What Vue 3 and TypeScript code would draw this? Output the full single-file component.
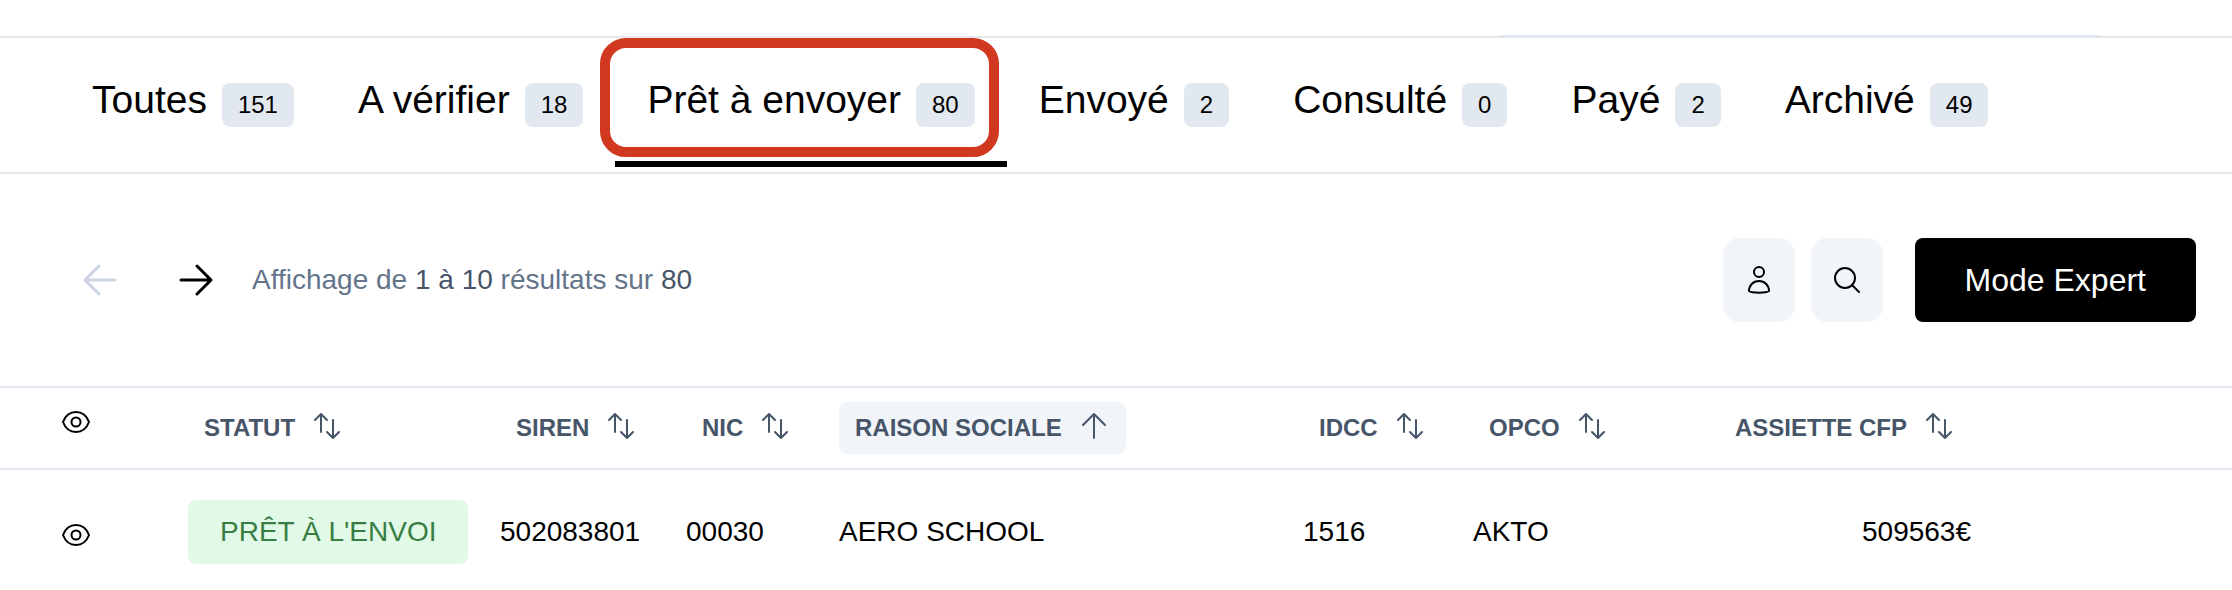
<script setup lang="ts">
import { ref } from 'vue'

interface Tab { label: string; count: number; highlighted?: boolean }
interface Column { key: string; label: string; sorted?: boolean; end?: boolean }

const tabs: Tab[] = [
  { label: 'Toutes', count: 151 },
  { label: 'A vérifier', count: 18 },
  { label: 'Prêt à envoyer', count: 80, highlighted: true },
  { label: 'Envoyé', count: 2 },
  { label: 'Consulté', count: 0 },
  { label: 'Payé', count: 2 },
  { label: 'Archivé', count: 49 },
]
const active = ref('Prêt à envoyer')

const columns: Column[] = [
  { key: 'statut', label: 'STATUT' },
  { key: 'siren', label: 'SIREN' },
  { key: 'nic', label: 'NIC' },
  { key: 'raison', label: 'RAISON SOCIALE', sorted: true },
  { key: 'idcc', label: 'IDCC' },
  { key: 'opco', label: 'OPCO' },
  { key: 'assiette', label: 'ASSIETTE CFP', end: true },
]

const rows = [
  {
    statut: "PRÊT À L'ENVOI",
    siren: '502083801',
    nic: '00030',
    raison: 'AERO SCHOOL',
    idcc: '1516',
    opco: 'AKTO',
    assiette: '509563€',
  },
]
</script>

<template>
  <main class="page">
    <div class="top-strip"><div class="field-edge"></div></div>

    <nav class="tabs" aria-label="Statuts">
      <button
        v-for="tab in tabs"
        :key="tab.label"
        type="button"
        class="tab"
        :class="{ active: tab.label === active }"
        @click="active = tab.label"
      >
        <span>{{ tab.label }}</span>
        <span class="count">{{ tab.count }}</span>
        <span v-if="tab.highlighted" class="marker"></span>
      </button>
    </nav>

    <section class="toolbar">
      <div class="pager">
        <button type="button" class="arrow" disabled aria-label="Page précédente">
          <svg width="40" height="40" viewBox="0 0 40 40"><path d="M35 20H5M19 6L5 20L19 34" /></svg>
        </button>
        <button type="button" class="arrow" aria-label="Page suivante">
          <svg width="40" height="40" viewBox="0 0 40 40"><path d="M5 20H35M21 6L35 20L21 34" /></svg>
        </button>
        <p class="summary">Affichage de <b>1 à 10</b> résultats sur <b>80</b></p>
      </div>
      <div class="actions">
        <button type="button" class="square" aria-label="Contact">
          <svg width="32" height="32" viewBox="0 0 32 32">
            <circle cx="16" cy="8" r="5" />
            <path d="M16 17C10 17 6 21.500 6 27C9 29.200 23 29.200 26 27C26 21.500 22 17 16 17Z" />
          </svg>
        </button>
        <button type="button" class="square" aria-label="Rechercher">
          <svg width="32" height="32" viewBox="0 0 32 32">
            <circle cx="14" cy="14" r="10" />
            <path d="M21 21L28 28" />
          </svg>
        </button>
        <button type="button" class="expert">Mode Expert</button>
      </div>
    </section>

    <table class="grid">
      <colgroup>
        <col class="c-view" />
        <col v-for="c in columns" :key="c.key" :class="'c-' + c.key" />
        <col />
      </colgroup>
      <thead>
        <tr>
          <th class="view">
            <button type="button" class="eye" aria-label="Colonnes visibles">
              <svg width="32" height="28" viewBox="0 0 32 28">
                <path d="M3 14C8 0.700 24 0.700 29 14C24 27.300 8 27.300 3 14Z" />
                <circle cx="16" cy="14" r="4.500" />
              </svg>
            </button>
          </th>
          <th v-for="c in columns" :key="c.key" :class="{ end: c.end }" scope="col">
            <button type="button" class="sort" :class="{ sorted: c.sorted }">
              <span>{{ c.label }}</span>
              <svg v-if="c.sorted" width="32" height="32" viewBox="0 0 32 32">
                <path d="M16 26V2M5 13L16 2L27 13" />
              </svg>
              <svg v-else width="32" height="32" viewBox="0 0 32 32">
                <path d="M10 20V2M4 8L10 2L16 8M22 8V26M16 20L22 26L28 20" />
              </svg>
            </button>
          </th>
          <td></td>
        </tr>
      </thead>
      <tbody>
        <tr v-for="row in rows" :key="row.siren">
          <td class="view">
            <button type="button" class="eye" aria-label="Voir la ligne">
              <svg width="32" height="28" viewBox="0 0 32 28">
                <path d="M3 14C8 0.700 24 0.700 29 14C24 27.300 8 27.300 3 14Z" />
                <circle cx="16" cy="14" r="4.500" />
              </svg>
            </button>
          </td>
          <td><span class="status">{{ row.statut }}</span></td>
          <td>{{ row.siren }}</td>
          <td>{{ row.nic }}</td>
          <td>{{ row.raison }}</td>
          <td>{{ row.idcc }}</td>
          <td>{{ row.opco }}</td>
          <td class="end">{{ row.assiette }}</td>
          <td></td>
        </tr>
      </tbody>
    </table>
  </main>
</template>

<style>
body {
  background: #fff;
}
</style>

<style scoped>
.page {
  font-family: "Liberation Sans", Arial, sans-serif;
  color: #000;
}
button {
  font: inherit;
  color: inherit;
  background: none;
  border: 0;
  padding: 0;
  margin: 0;
  cursor: pointer;
}
svg {
  display: block;
  flex: none;
  fill: none;
  stroke: currentColor;
  stroke-width: 2;
  stroke-linecap: round;
  stroke-linejoin: round;
}
.top-strip {
  display: flex;
  align-items: flex-end;
  justify-content: flex-end;
  height: 36px;
  padding-right: 132px;
  border-bottom: 2px solid #e5e7eb;
}
.field-edge {
  width: 600px;
  height: 3px;
  margin-bottom: -2px;
  background: #e2e8f0;
}
.tabs {
  display: flex;
  padding: 0 60px 5px;
  border-bottom: 2px solid #e5e7eb;
}
.tab {
  position: relative;
  display: flex;
  align-items: baseline;
  gap: 15px;
  padding: 42px 32px 34px;
  border-bottom: 6px solid transparent;
  font-size: 39px;
  line-height: 40px;
  white-space: nowrap;
}
.tab.active {
  border-bottom-color: #000;
}
.count {
  padding: 0 16px;
  border-radius: 8px;
  background: #e2e8f0;
  font-size: 24px;
  line-height: 44px;
}
.marker {
  position: absolute;
  inset: 0 8px 4px -15px;
  border: 10px solid #d03920;
  border-radius: 26px;
  pointer-events: none;
}
.toolbar {
  display: flex;
  align-items: center;
  justify-content: space-between;
  padding: 64px 36px 64px 68px;
}
.pager,
.actions {
  display: flex;
  align-items: center;
}
.arrow {
  display: flex;
  justify-content: center;
  width: 64px;
  margin-right: 32px;
}
.arrow svg {
  stroke-width: 3;
}
.arrow:disabled {
  color: #cbd5e1;
}
.summary {
  margin: 0 0 0 -8px;
  color: #64748b;
  font-size: 28px;
  line-height: 40px;
}
.summary b {
  color: #475569;
  font-weight: 400;
}
.actions {
  gap: 16px;
}
.square {
  display: flex;
  align-items: center;
  justify-content: center;
  width: 72px;
  height: 84px;
  border-radius: 16px;
  background: #f1f5f9;
}
.expert {
  height: 84px;
  margin-left: 16px;
  padding: 0 50px;
  border-radius: 8px;
  background: #000;
  color: #fff;
  font-size: 32px;
}
.grid {
  width: 100%;
  table-layout: fixed;
  border-collapse: separate;
  border-spacing: 0;
  font-size: 28px;
  line-height: 32px;
}
.c-view { width: 172px; }
.c-statut { width: 312px; }
.c-siren { width: 186px; }
.c-nic { width: 153px; }
.c-raison { width: 464px; }
.c-idcc { width: 170px; }
.c-opco { width: 183px; }
.c-assiette { width: 347px; }
th,
td {
  padding: 30px 16px 20px;
  text-align: left;
  vertical-align: middle;
  white-space: nowrap;
}
thead th,
thead td {
  padding: 14px 16px;
  border-top: 2px solid #e2e8f0;
  border-bottom: 2px solid #e2e8f0;
}
.end {
  text-align: right;
}
th.view,
td.view {
  padding-left: 60px;
}
thead th.view {
  padding-left: 60px;
  padding-top: 2px;
}
td.view {
  padding-top: 36px;
}
.eye {
  display: block;
}
.sort {
  display: inline-flex;
  align-items: center;
  gap: 16px;
  height: 52px;
  padding: 0 16px;
  border-radius: 8px;
  color: #475569;
  font-size: 24px;
  font-weight: 700;
  vertical-align: top;
}
.sorted {
  background: #f1f5f9;
}
.status {
  display: inline-block;
  padding: 0 32px;
  border-radius: 8px;
  background: #e1fae8;
  color: #3a7d44;
  line-height: 64px;
  vertical-align: top;
}
</style>
